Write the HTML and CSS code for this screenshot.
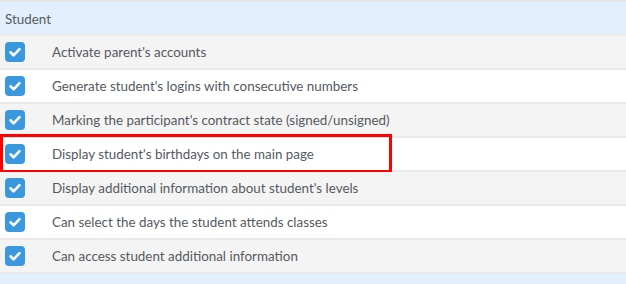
FILE: index.html
```html
<!DOCTYPE html>
<html>
<head>
<meta charset="utf-8">
<link rel="stylesheet" href="styles.css">
</head>
<body>
<div class="table">
  <div class="section-head">Student</div>
  <div class="row odd">
    <span class="cb"><svg viewBox="0 0 20 20"><path d="M5.5 10.3 L8.6 13.3 L14.5 7.2"/></svg></span>
    <span class="label">Activate parent's accounts</span>
  </div>
  <div class="row">
    <span class="cb"><svg viewBox="0 0 20 20"><path d="M5.5 10.3 L8.6 13.3 L14.5 7.2"/></svg></span>
    <span class="label">Generate student's logins with consecutive numbers</span>
  </div>
  <div class="row odd">
    <span class="cb"><svg viewBox="0 0 20 20"><path d="M5.5 10.3 L8.6 13.3 L14.5 7.2"/></svg></span>
    <span class="label">Marking the participant's contract state (signed/unsigned)</span>
  </div>
  <div class="row highlighted">
    <span class="cb"><svg viewBox="0 0 20 20"><path d="M5.5 10.3 L8.6 13.3 L14.5 7.2"/></svg></span>
    <span class="label">Display student's birthdays on the main page</span>
    <span class="mark"></span>
  </div>
  <div class="row odd">
    <span class="cb"><svg viewBox="0 0 20 20"><path d="M5.5 10.3 L8.6 13.3 L14.5 7.2"/></svg></span>
    <span class="label">Display additional information about student's levels</span>
  </div>
  <div class="row">
    <span class="cb"><svg viewBox="0 0 20 20"><path d="M5.5 10.3 L8.6 13.3 L14.5 7.2"/></svg></span>
    <span class="label">Can select the days the student attends classes</span>
  </div>
  <div class="row odd">
    <span class="cb"><svg viewBox="0 0 20 20"><path d="M5.5 10.3 L8.6 13.3 L14.5 7.2"/></svg></span>
    <span class="label">Can access student additional information</span>
  </div>
  <div class="section-head next"></div>
</div>
</body>
</html>
```
FILE: styles.css
```css
html, body {
  margin: 0;
  padding: 0;
  background: #ffffff;
}
body {
  font-family: Lato, "Liberation Sans", sans-serif;
  font-size: 13.4px;
  color: #555a5f;
}
.table {
  display: flex;
  flex-direction: column;
  border-top: 2px solid #e6e6e6;
}
.section-head {
  height: 34px;
  box-sizing: border-box;
  background: #e3effd;
  border-bottom: 2px solid #ebebeb;
  display: flex;
  align-items: center;
  padding-left: 5px;
  padding-top: 2px;
}
.section-head.next {
  border-bottom: none;
  height: 20px;
}
.row {
  height: 34px;
  box-sizing: border-box;
  border-bottom: 2px solid #e9e9e9;
  background: #ffffff;
  display: flex;
  align-items: center;
  padding-left: 5px;
  position: relative;
}
.row.odd {
  background: #f4f4f4;
}
.cb {
  width: 20px;
  height: 20px;
  border-radius: 4px;
  background: #3a98df;
  display: flex;
  flex: none;
}
.cb svg {
  width: 20px;
  height: 20px;
}
.cb path {
  fill: none;
  stroke: #ffffff;
  stroke-width: 2.6;
  stroke-linecap: round;
  stroke-linejoin: round;
}
.label {
  margin-left: 27px;
}
.mark {
  position: absolute;
  left: 0;
  top: -4px;
  width: 392px;
  height: 39px;
  box-sizing: border-box;
  border: 3px solid #ff0000;
  pointer-events: none;
}
```
